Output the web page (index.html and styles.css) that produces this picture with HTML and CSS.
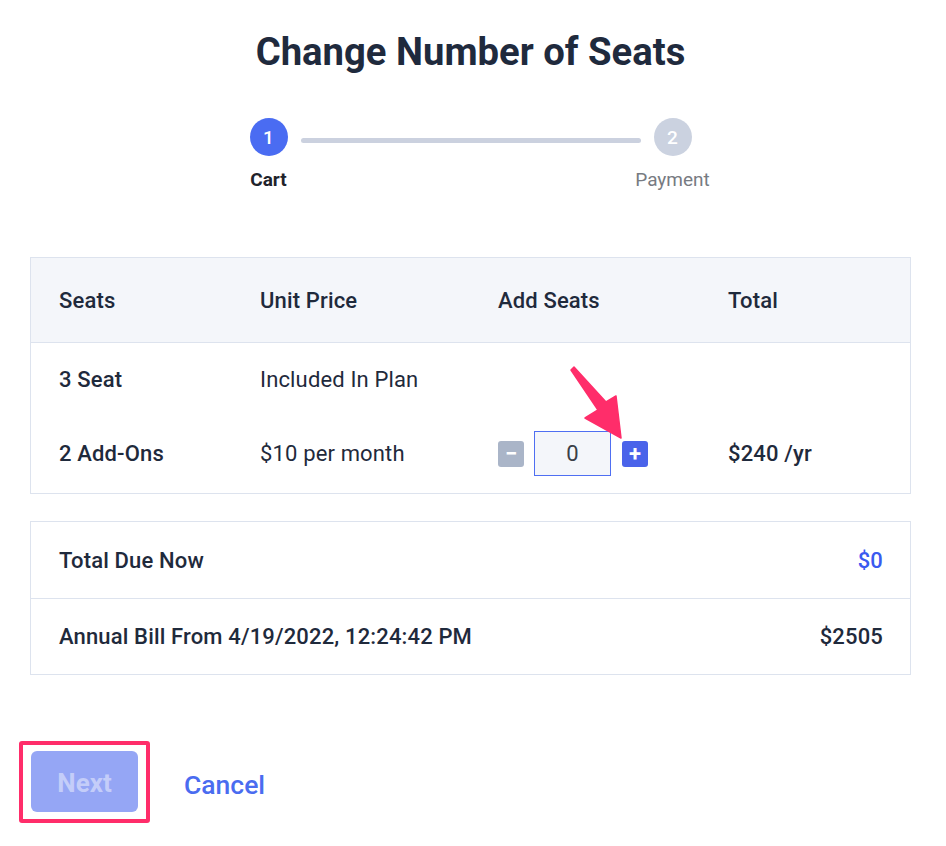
FILE: index.html
```html
<!DOCTYPE html>
<html lang="en">
<head>
<meta charset="utf-8">
<title>Change Number of Seats</title>
<link rel="stylesheet" href="styles.css">
</head>
<body>
<div class="page">
  <h1 class="title">Change Number of Seats</h1>

  <div class="stepper">
    <div class="step">
      <div class="circle active">1</div>
      <div class="step-label active">Cart</div>
    </div>
    <div class="step-line"></div>
    <div class="step">
      <div class="circle">2</div>
      <div class="step-label">Payment</div>
    </div>
  </div>

  <div class="card seats-table">
    <div class="grid head">
      <div>Seats</div>
      <div>Unit Price</div>
      <div>Add Seats</div>
      <div>Total</div>
    </div>
    <div class="body">
      <div class="grid row row-first">
        <div class="strong">3 Seat</div>
        <div>Included In Plan</div>
        <div></div>
        <div></div>
      </div>
      <div class="grid row row-second">
        <div class="strong">2 Add-Ons</div>
        <div>$10 per month</div>
        <div class="qty">
          <button class="qty-btn minus" type="button">&minus;</button>
          <div class="qty-input">0</div>
          <button class="qty-btn plus" type="button">+</button>
        </div>
        <div class="strong">$240 /yr</div>
      </div>
    </div>
  </div>

  <div class="card summary">
    <div class="sum-row">
      <span>Total Due Now</span>
      <span class="blue">$0</span>
    </div>
    <div class="sum-row">
      <span>Annual Bill From 4/19/2022, 12:24:42 PM</span>
      <span>$2505</span>
    </div>
  </div>

  <div class="footer">
    <div class="highlight">
      <button class="next" type="button">Next</button>
    </div>
    <a class="cancel" href="#">Cancel</a>
  </div>
</div>

<svg class="annot-arrow" width="946" height="846" viewBox="0 0 946 846" aria-hidden="true">
  <polygon points="574,367 606,402 616,396 621,438 585,418 598,410 571,370" fill="#ff2d6a" stroke="#ff2d6a" stroke-width="1.5" stroke-linejoin="round"/>
</svg>
</body>
</html>
```

FILE: styles.css
```css
* { box-sizing: border-box; }

body {
  margin: 0;
  background: #ffffff;
  font-family: Roboto, "Liberation Sans", Arial, sans-serif;
  color: #1f2a3c;
}

.page {
  width: 881px;
  margin-left: 30px;
  position: relative;
}

.title {
  margin: 0;
  padding-top: 29px;
  text-align: center;
  font-size: 38.25px;
  line-height: 46px;
  font-weight: 700;
  color: #1f2a3d;
}

.stepper {
  display: flex;
  justify-content: center;
  align-items: flex-start;
  margin-top: 43px;
}

.step {
  width: 38px;
  display: flex;
  flex-direction: column;
  align-items: center;
}

.circle {
  width: 38px;
  height: 38px;
  border-radius: 50%;
  background: #cbd2e0;
  color: #ffffff;
  font-size: 19px;
  font-weight: 500;
  display: flex;
  align-items: center;
  justify-content: center;
}

.circle.active { background: #4a6cf2; }

.step-label {
  margin-top: 12px;
  white-space: nowrap;
  font-size: 19px;
  line-height: 24px;
  color: #777b82;
}

.step-label.active {
  font-weight: 700;
  color: #1f232b;
}

.step-line {
  width: 340px;
  height: 5px;
  margin: 20px 13px 0;
  border-radius: 3px;
  background: #cbd1df;
}

.card {
  border: 1px solid #dde3ee;
  font-size: 22px;
  font-weight: 500;
  letter-spacing: 0.15px;
}

.seats-table { margin-top: 65px; }

.grid {
  display: grid;
  grid-template-columns: 201px 238px 230px 1fr;
  padding-left: 28px;
  align-items: center;
}

.head {
  height: 85px;
  background: #f4f6fa;
  border-bottom: 1px solid #dde3ee;
}

.body { padding: 20px 0 17px; }

.row { font-weight: 400; }
.row .strong { font-weight: 500; }

.row-first { height: 32px; }
.row-second { height: 45px; margin-top: 36px; }

.qty {
  display: flex;
  align-items: center;
}

.qty-btn {
  width: 26px;
  height: 26px;
  border: none;
  border-radius: 3px;
  padding: 0;
  color: #ffffff;
  font-family: inherit;
  font-size: 22px;
  font-weight: 700;
  line-height: 26px;
  display: flex;
  align-items: center;
  justify-content: center;
}

.minus { background: #aab5c8; }
.plus { background: #4a63ea; }

.qty-input {
  width: 77px;
  height: 45px;
  margin: 0 11px 0 10px;
  border: 1.5px solid #4f6ff2;
  background: #f4f6fa;
  display: flex;
  align-items: center;
  justify-content: center;
  font-size: 22px;
  font-weight: 400;
  color: #3a3f47;
}

.summary { margin-top: 27px; }

.sum-row {
  height: 76px;
  padding: 0 27px 0 28px;
  display: flex;
  align-items: center;
  justify-content: space-between;
}

.sum-row + .sum-row {
  border-top: 1px solid #dde3ee;
  height: 76px;
}

.blue { color: #3a5af0; }

.footer {
  margin-top: 66px;
  display: flex;
  align-items: center;
}

.highlight {
  margin-left: -11px;
  padding: 6px 8px 7px;
  border: 4px solid #ff2d6a;
  border-radius: 3px;
}

.next {
  display: block;
  width: 107px;
  height: 61px;
  padding-top: 4px;
  border: none;
  border-radius: 6px;
  background: #95a6f5;
  color: #c4cdf9;
  font-family: inherit;
  font-size: 26px;
  font-weight: 700;
}

.cancel {
  margin-left: 34px;
  margin-top: 4px;
  color: #4a6cf0;
  font-size: 26.5px;
  font-weight: 500;
  text-decoration: none;
}

.annot-arrow {
  position: absolute;
  left: 0;
  top: 0;
  pointer-events: none;
}
```
